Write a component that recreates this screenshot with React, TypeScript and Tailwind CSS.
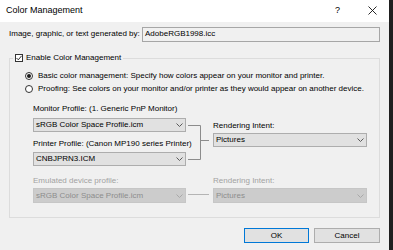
import React from 'react';

interface ComboProps {
    value: string;
    disabled?: boolean;
    className?: string;
}

const Chevron: React.FC<{ disabled?: boolean }> = ({ disabled }) => (
    <svg width="7" height="4" viewBox="0 0 7 4" className="shrink-0">
        <path d="M0.5 0.5 L3.5 3.5 L6.5 0.5" fill="none" stroke={disabled ? '#a8a8a8' : '#5a5a5a'} strokeWidth="1" />
    </svg>
);

const Combo: React.FC<ComboProps> = ({ value, disabled, className }) => (
    <div
        className={`flex items-center justify-between border pl-[2px] pr-[2px] leading-[10px] ${
            disabled ? 'border-[#c6c6c6] bg-[#cccccc] text-[#8c8c8c]' : 'border-[#adadad] bg-[#e1e1e1] text-black'
        } ${className ?? ''}`}
    >
        <span>{value}</span>
        <Chevron disabled={disabled} />
    </div>
);

const Radio: React.FC<{ checked?: boolean; label: string }> = ({ checked, label }) => (
    <div className="flex h-[13px] items-center">
        <span className="flex h-[8px] w-[8px] items-center justify-center rounded-full border border-[#333333] bg-white">
            {checked && <span className="h-[4px] w-[4px] rounded-full bg-[#1a1a1a]" />}
        </span>
        <span className="ml-[5px] whitespace-nowrap">{label}</span>
    </div>
);

export default function App() {
    return (
        <div className="flex h-[250px] w-[393px] font-['Liberation_Sans',Arial,sans-serif] text-[8px] text-black">
            <div className="flex h-full w-[389px] flex-col bg-[#f0f0f0]">
                {/* title bar */}
                <div className="flex h-[22px] shrink-0 items-center bg-white pb-[1px]">
                    <span className="pl-[6px] text-[9px] leading-[11px]">Color Management</span>
                    <span className="ml-auto text-[9px] leading-[11px]">?</span>
                    <svg width="9" height="9" viewBox="0 0 9 9" className="ml-[28px] mr-[12px]">
                        <path d="M0.5 0.5 L8.5 8.5 M8.5 0.5 L0.5 8.5" stroke="#111111" strokeWidth="0.9" />
                    </svg>
                </div>

                <div className="flex flex-col px-[9px]">
                    {/* source row */}
                    <div className="mt-[5px] flex h-[15px] items-center">
                        <span className="w-[133px] whitespace-nowrap pb-[2px] leading-[11px]">
                            Image, graphic, or text generated by:
                        </span>
                        <div className="flex h-[15px] w-[238px] items-center border border-[#a6a6a6] bg-[#f0f0f0] pb-[2px] pl-[2px] leading-[11px]">
                            AdobeRGB1998.icc
                        </div>
                    </div>

                    {/* group box */}
                    <fieldset className="mx-0 mt-[11px] w-[371px] border border-[#dcdcdc] p-0 pb-[14px]">
                        <legend className="ml-[3px] px-[2px] py-0">
                            <div className="flex h-[10px] items-center gap-[3px] leading-[10px]">
                                <span className="flex h-[8px] w-[8px] items-center justify-center border border-[#333333] bg-white">
                                    <svg width="6" height="6" viewBox="0 0 6 6">
                                        <path d="M0.5 3 L2.3 4.8 L5.6 0.8" fill="none" stroke="#1a1a1a" strokeWidth="0.9" />
                                    </svg>
                                </span>
                                <span className="whitespace-nowrap">Enable Color Management</span>
                            </div>
                        </legend>

                        <div className="mt-[6px] flex flex-col pl-[15px] leading-[13px]">
                            <Radio checked label="Basic color management: Specify how colors appear on your monitor and printer." />
                            <Radio label="Proofing: See colors on your monitor and/or printer as they would appear on another device." />
                        </div>

                        <div className="mt-[9px] flex pl-[23px]">
                            <div className="flex w-[153px] flex-col">
                                <span className="whitespace-nowrap leading-[10px]">Monitor Profile: (1. Generic PnP Monitor)</span>
                                <Combo value="sRGB Color Space Profile.icm" className="mt-[4px] h-[14px]" />
                                <span className="mt-[7px] whitespace-nowrap leading-[10px]">
                                    Printer Profile: (Canon MP190 series Printer)
                                </span>
                                <Combo value="CNBJPRN3.ICM" className="mt-[3px] h-[14px]" />
                                <span className="mt-[10px] whitespace-nowrap leading-[10px] text-[#a2a2a2]">
                                    Emulated device profile:
                                </span>
                                <Combo value="sRGB Color Space Profile.icm" disabled className="mt-[2px] h-[15px]" />
                            </div>

                            <svg width="27" height="99" viewBox="0 0 27 99" className="shrink-0">
                                <path d="M2 21.5 H14.5 V55.5 H2 M14.5 36.5 H23" fill="none" stroke="#8c8c8c" strokeWidth="1" />
                                <path d="M2 90.5 H23" fill="none" stroke="#b4b4b4" strokeWidth="1" />
                            </svg>

                            <div className="flex w-[154px] flex-col">
                                <span className="mt-[17px] whitespace-nowrap leading-[10px]">Rendering Intent:</span>
                                <Combo value="Pictures" className="mt-[2px] h-[14px]" />
                                <span className="mt-[29px] whitespace-nowrap leading-[10px] text-[#a2a2a2]">Rendering Intent:</span>
                                <Combo value="Pictures" disabled className="mt-[2px] h-[15px]" />
                            </div>
                        </div>
                    </fieldset>

                    {/* buttons */}
                    <div className="mt-[10px] flex justify-end gap-[5px]">
                        <button className="h-[15px] w-[65px] border border-[#0078d7] bg-[#e1e1e1] leading-[11px]">OK</button>
                        <button className="h-[15px] w-[66px] border border-[#adadad] bg-[#e1e1e1] leading-[11px]">Cancel</button>
                    </div>
                </div>
            </div>
            <div className="h-full w-[4px] bg-[#1f1f1f]" />
        </div>
    );
}
